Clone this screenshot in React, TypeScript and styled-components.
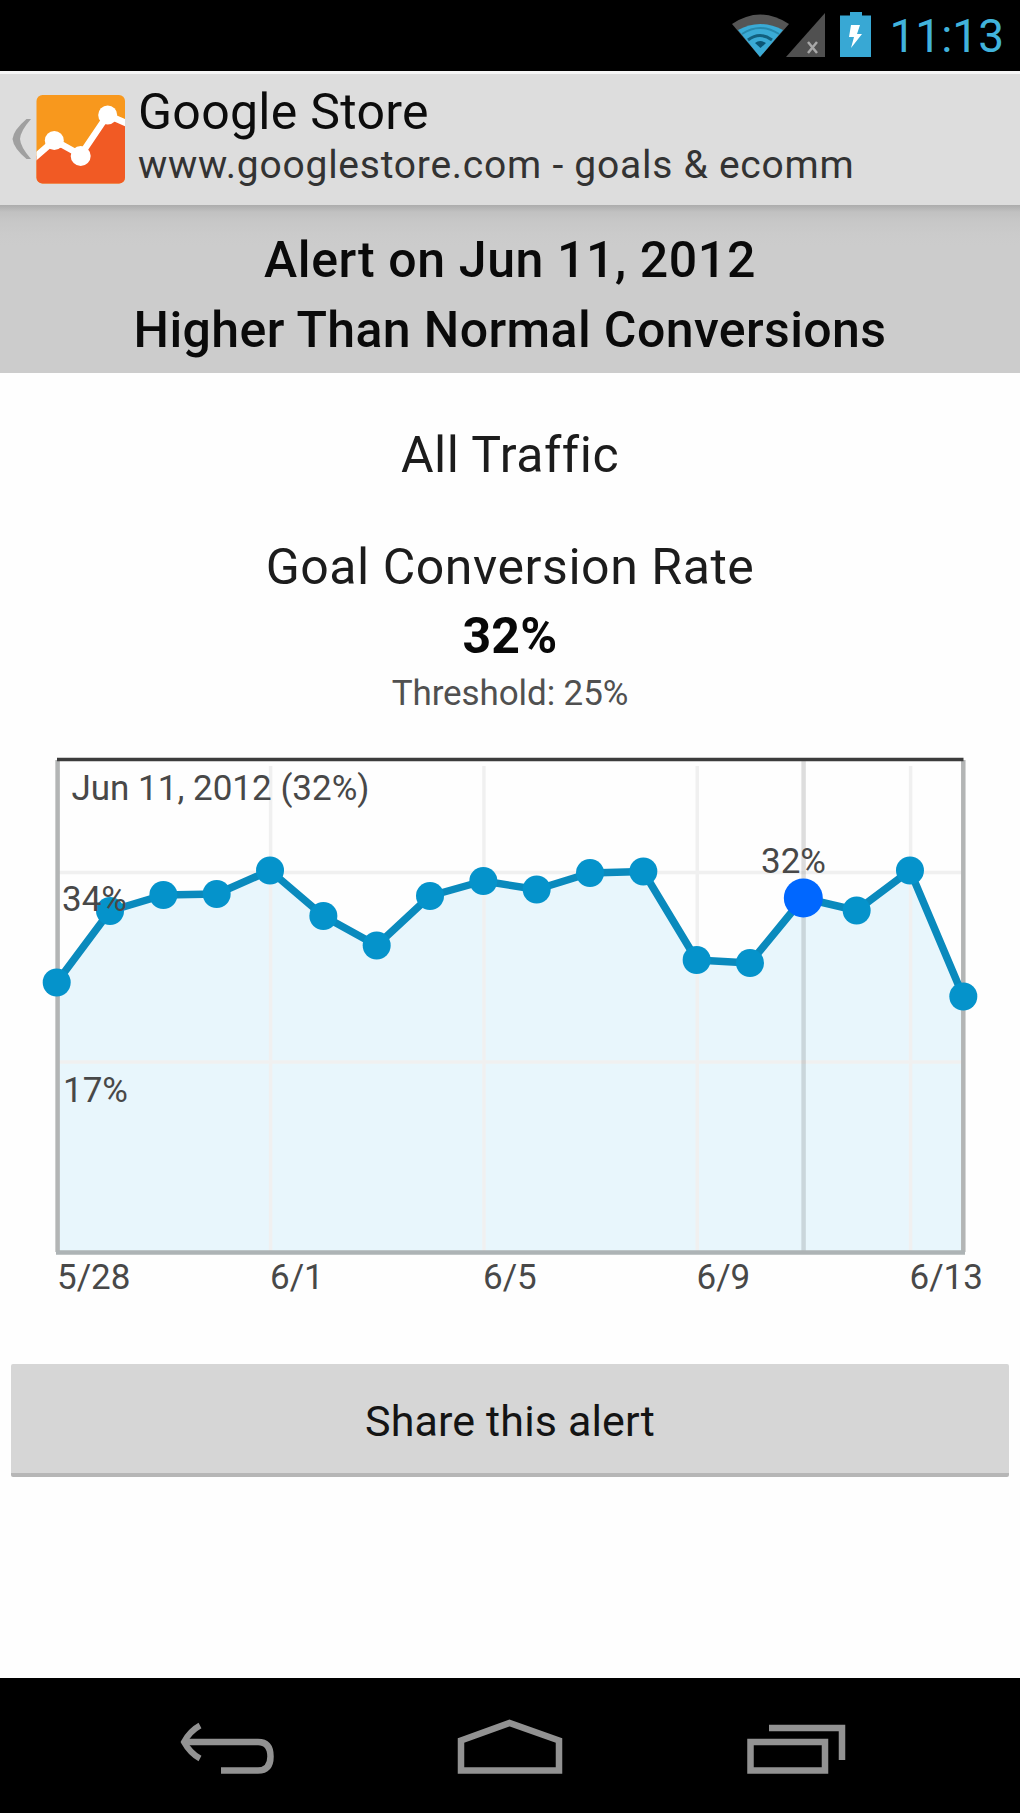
import React from 'react';
import styled, { createGlobalStyle } from 'styled-components';

const GlobalStyle = createGlobalStyle`
  * { box-sizing: border-box; }
  html, body { margin: 0; padding: 0; background: #fff; }
  body { font-family: Roboto, "Liberation Sans", sans-serif; }
`;

const Screen = styled.div`
  display: flex;
  flex-direction: column;
  width: 1020px;
  height: 1813px;
  overflow: hidden;
  background: #fefefe;
`;

const StatusBar = styled.header`
  display: flex;
  flex: none;
  justify-content: flex-end;
  align-items: flex-start;
  height: 71px;
  padding-right: 16px;
  background: #000;
`;

const StatusIcons = styled.svg`
  display: block;
  width: 150px;
  height: 71px;
  margin-right: 12px;
`;

const Clock = styled.time`
  font-size: 46px;
  line-height: 73px;
  color: #41b3dc;
`;

const AppBar = styled.div`
  display: flex;
  flex: none;
  height: 134px;
  border-top: 3px solid #f6f6f6;
  background: #dddddd;
`;

const UpButton = styled.button`
  display: block;
  width: 138px;
  height: 131px;
  padding: 0;
  border: 0;
  background: transparent;
`;

const Titles = styled.div`
  display: flex;
  flex-direction: column;
  padding-top: 9px;
`;

const AppTitle = styled.h1`
  margin: 0;
  font-size: 50px;
  font-weight: 400;
  line-height: 58px;
  letter-spacing: 0.3px;
  color: #0c0c0c;
`;

const AppSubtitle = styled.p`
  margin: 0;
  font-size: 39px;
  line-height: 48px;
  letter-spacing: 0.75px;
  white-space: nowrap;
  color: #333;
`;

const Banner = styled.section`
  flex: none;
  height: 168px;
  padding-top: 20px;
  text-align: center;
  background: linear-gradient(#acacac 0, #c1c1c1 7px, #c7c7c7 16px, #cbcbcb 30px, #cccccc 40px);
`;

const BannerLine = styled.p<{ $spacing: number }>`
  margin: 0;
  font-size: 50px;
  font-weight: 500;
  line-height: 70px;
  letter-spacing: ${({ $spacing }) => $spacing}px;
  color: #0a0a0a;
`;

const Content = styled.main`
  display: flex;
  flex: 1;
  flex-direction: column;
  text-align: center;
  min-height: 0;
`;

const Heading = styled.h2<{ $top: number; $spacing: number }>`
  margin: ${({ $top }) => $top}px 0 0;
  font-size: 50px;
  font-weight: 400;
  line-height: 60px;
  letter-spacing: ${({ $spacing }) => $spacing}px;
  color: #1c1c1c;
`;

const Rate = styled.p`
  margin: 5px 0 0;
  font-size: 50px;
  font-weight: 700;
  line-height: 69px;
  letter-spacing: 0.3px;
  color: #080808;
`;

const Threshold = styled.p`
  margin: 2px 0 25px;
  font-size: 35px;
  line-height: 42px;
  letter-spacing: -0.1px;
  color: #505050;
`;

const ChartCanvas = styled.svg`
  display: block;
  flex: none;
  width: 1020px;
  height: 570px;
`;

const ChartLabel = styled.text`
  font-family: Roboto, "Liberation Sans", sans-serif;
  font-size: 35px;
  fill: #484848;
`;

const ShareButton = styled.button`
  flex: none;
  height: 113px;
  margin: 54px 11px 0;
  padding: 4px 0 0;
  border: 0;
  border-bottom: 4px solid #b6b6b6;
  border-radius: 2px;
  background: #d6d6d6;
  font: 400 43px Roboto, "Liberation Sans", sans-serif;
  letter-spacing: 0.15px;
  color: #141414;
`;

const NavBar = styled.nav`
  display: flex;
  flex: none;
  justify-content: space-between;
  height: 135px;
  padding: 0 157px;
  background: #000;
`;

const NavButton = styled.button`
  display: block;
  width: 140px;
  height: 135px;
  padding: 0;
  border: 0;
  background: transparent;
`;

const NavIcon = styled.svg`
  display: block;
  width: 140px;
  height: 135px;
  fill: none;
  stroke: #929292;
  stroke-width: 6.5;
`;

const LEFT = 56.7;
const STEP = 53.33;
const BOTTOM = 512;
const VALUES = [242.5, 171, 155, 154, 130.5, 176, 205.5, 156, 141, 149.5, 133, 131.5, 220, 223, 158, 170.5, 130.5, 256.5];
const SELECTED = 14;
const POINTS = VALUES.map((y, i) => ({ x: LEFT + STEP * i, y }));
const LINE = POINTS.map(({ x, y }) => `${x.toFixed(1)},${y}`).join(' ');
const RIGHT = LEFT + STEP * (VALUES.length - 1);
const TICKS = [
  { x: 57, label: '5/28' },
  { x: 270, label: '6/1' },
  { x: 483, label: '6/5' },
  { x: 696.5, label: '6/9' },
  { x: 909.5, label: '6/13' },
];

function ConversionChart() {
  return (
    <ChartCanvas viewBox="0 0 1020 570">
      <polygon points={`${LEFT},${BOTTOM} ${LINE} ${RIGHT},${BOTTOM}`} fill="#e8f6fc" />
      <g stroke="#f0f0f0" strokeWidth="3.5">
        {[4, 8, 12, 16].map((i) => (
          <line key={i} x1={POINTS[i].x + 0.6} x2={POINTS[i].x + 0.6} y1="26" y2={BOTTOM} />
        ))}
        <line x1={LEFT} x2={RIGHT} y1="132.500" y2="132.500" />
        <line x1={LEFT} x2={RIGHT} y1="322" y2="322" />
      </g>
      <line x1="803.6" x2="803.6" y1="20" y2={BOTTOM} stroke="#000" strokeOpacity="0.13" strokeWidth="4.500" />
      <path d={`M57.6 20V${BOTTOM}M963.3 20V${BOTTOM}`} stroke="#b3b5b5" strokeWidth="4.500" />
      <path d="M56 512.500H965" stroke="#adb3b5" strokeWidth="4.500" />
      <path d="M57 19.500H963.500" stroke="#3c3c3c" strokeWidth="3.500" />
      <polyline points={LINE} fill="none" stroke="#0a8abd" strokeWidth="7.500" strokeLinejoin="round" />
      {POINTS.map(({ x, y }, i) =>
        i === SELECTED ? (
          <circle key={i} cx={x} cy={y} r="19.500" fill="#0067ff" />
        ) : (
          <circle key={i} cx={x} cy={y} r="14" fill="#0593cb" />
        ),
      )}
      <ChartLabel x="71.500" y="60">Jun 11, 2012 (32%)</ChartLabel>
      <ChartLabel x="62" y="171">34%</ChartLabel>
      <ChartLabel x="63" y="362">17%</ChartLabel>
      <ChartLabel x="761" y="133">32%</ChartLabel>
      {TICKS.map(({ x, label }) => (
        <ChartLabel key={label} x={x} y="548.500">{label}</ChartLabel>
      ))}
    </ChartCanvas>
  );
}

function StatusGlyphs() {
  return (
    <StatusIcons viewBox="727 0 150 71">
      <path d="M760 57L732 24Q760 5 789 24Z" fill="#555" />
      <path d="M760 57L738 30Q760 18 783 30Z" fill="#3aabd6" />
      <path d="M742 34Q760 22 779 34" fill="none" stroke="#2789ad" strokeWidth="2" />
      <path d="M748 40Q760 31 772 40" fill="none" stroke="#12607f" strokeWidth="3" />
      <path d="M755 43Q760 39 766 43L760.500 48Z" fill="#0b5676" />
      <path d="M786 57H825V13Z" fill="#505050" />
      <path d="M808 42L817 53M817 42L808 53" stroke="#a8a8a8" strokeWidth="2.500" />
      <path d="M840 15.500H850V12H862V15.500H871V57H840Z" fill="#38a8d4" />
      <path d="M851 25H860L857 34H862L851 48L854 37H849Z" fill="#fff" />
    </StatusIcons>
  );
}

function UpIcon() {
  return (
    <svg width="138" height="131" viewBox="0 74 138 131" display="block">
      <defs>
        <clipPath id="tile">
          <rect x="36.500" y="95" width="88.500" height="88.500" rx="6" />
        </clipPath>
      </defs>
      <path d="M26.500 119H31Q20.500 131 20 139Q20.500 147 31 159H26.500Q13.500 148 12.500 139Q13.500 130 26.500 119Z" fill="#a0a0a0" />
      <g clipPath="url(#tile)">
        <rect x="36" y="94" width="90" height="91" fill="#f8981d" />
        <path d="M34 158L54.300 140.500L80.700 156.500L107.700 115L128 124V186H34Z" fill="#f15a24" />
        <path d="M33 159L54.300 140.500L80.700 155L107.700 115L128 124" fill="none" stroke="#fff" strokeWidth="6.500" />
        <circle cx="54.300" cy="140.500" r="9.500" fill="#fff" />
        <circle cx="80.700" cy="156" r="10" fill="#fff" />
        <circle cx="107.700" cy="115" r="9.500" fill="#fff" />
      </g>
    </svg>
  );
}

export default function App() {
  return (
    <>
      <GlobalStyle />
      <Screen>
        <StatusBar>
          <StatusGlyphs />
          <Clock>11:13</Clock>
        </StatusBar>
        <AppBar>
          <UpButton aria-label="Up">
            <UpIcon />
          </UpButton>
          <Titles>
            <AppTitle>Google Store</AppTitle>
            <AppSubtitle>www.googlestore.com - goals &amp; ecomm</AppSubtitle>
          </Titles>
        </AppBar>
        <Banner>
          <BannerLine $spacing={0.6}>Alert on Jun 11, 2012</BannerLine>
          <BannerLine $spacing={0.4}>Higher Than Normal Conversions</BannerLine>
        </Banner>
        <Content>
          <Heading $top={52} $spacing={0.5}>All Traffic</Heading>
          <Heading $top={52} $spacing={0.55}>Goal Conversion Rate</Heading>
          <Rate>32%</Rate>
          <Threshold>Threshold: 25%</Threshold>
          <ConversionChart />
          <ShareButton>Share this alert</ShareButton>
        </Content>
        <NavBar>
          <NavButton aria-label="Back">
            <NavIcon viewBox="157 1678 140 135">
              <path d="M221 1770.500H258Q270.500 1770.500 270.500 1756.500Q270.500 1742 258 1742H184" />
              <path d="M200 1725.500Q190 1731 184 1742Q190 1753 200 1758.500" strokeWidth="6" />
            </NavIcon>
          </NavButton>
          <NavButton aria-label="Home">
            <NavIcon viewBox="440 1678 140 135">
              <path d="M461 1740.500L509.500 1723L559 1740.500V1770.500H461Z" />
            </NavIcon>
          </NavButton>
          <NavButton aria-label="Recent apps">
            <NavIcon viewBox="723 1678 140 135">
              <path d="M750.500 1742H825V1770.500H750.500Z" />
              <path d="M769 1728H842V1760" />
            </NavIcon>
          </NavButton>
        </NavBar>
      </Screen>
    </>
  );
}
